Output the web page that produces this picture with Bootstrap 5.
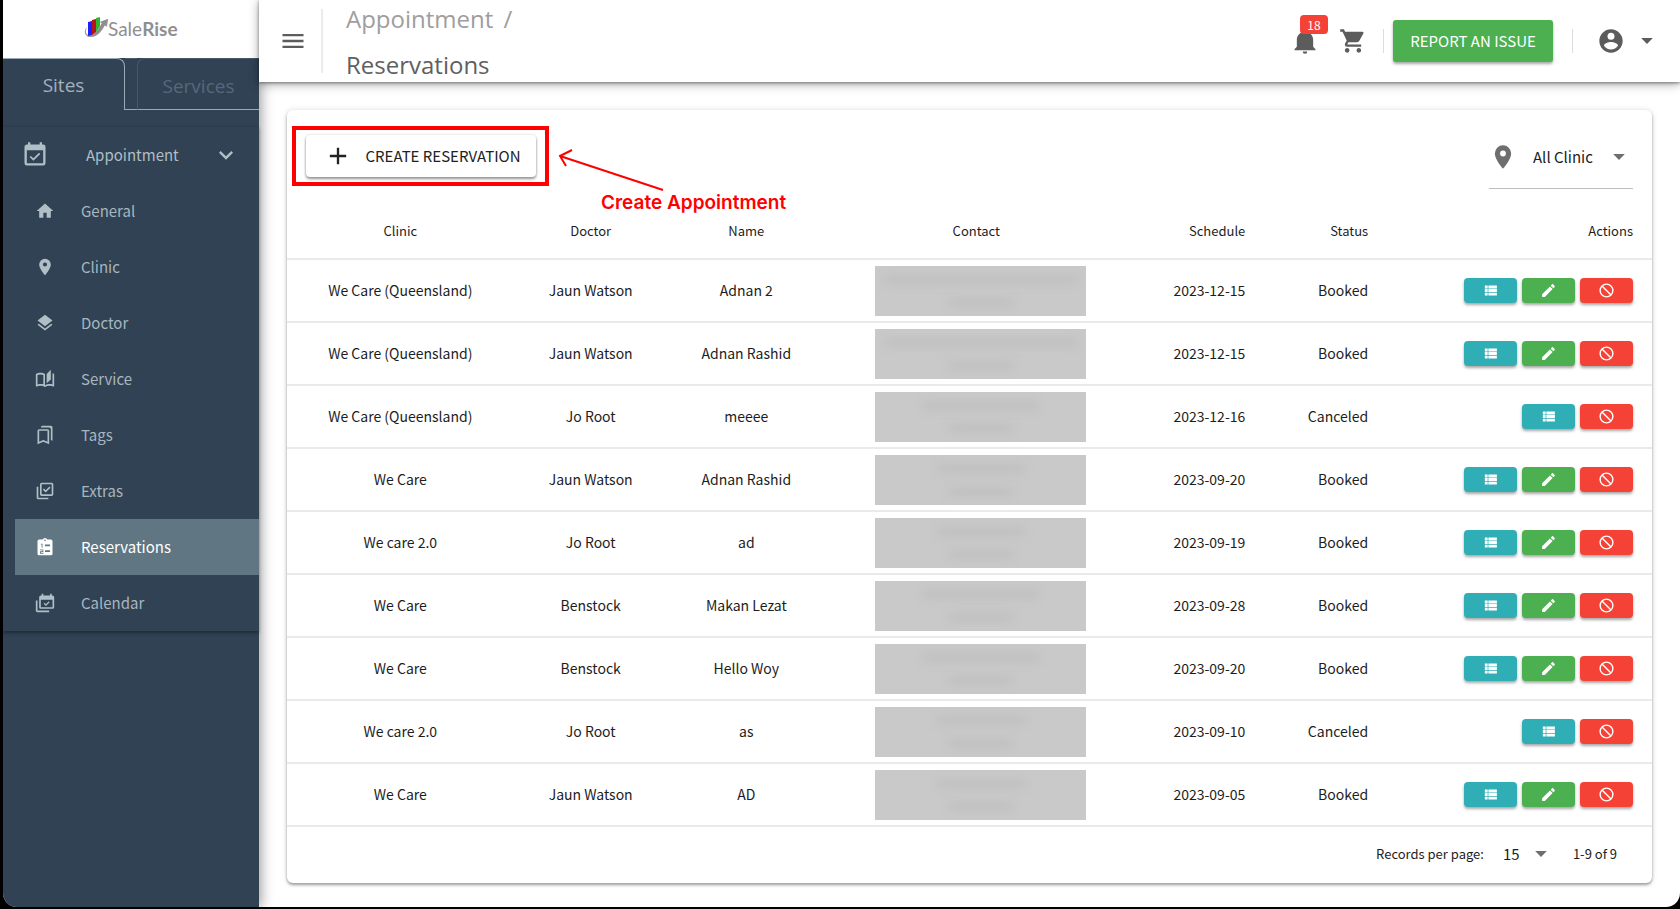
<!DOCTYPE html>
<html lang="en">
<head>
<meta charset="utf-8">
<meta name="viewport" content="width=device-width, initial-scale=1">
<title>SaleRise – Reservations</title>
<link href="https://cdn.jsdelivr.net/npm/bootstrap@5.3.0/dist/css/bootstrap.min.css" rel="stylesheet">
<style>
  :root { --navy: #314254; --mist: #b0bec5; --ink: #1d1d1d; --grey: #5c5c5c; }
  body { background: #000; color: var(--ink); font-family: "Noto Sans CJK SC", "Noto Sans", sans-serif; font-size: 14px; line-height: 20px; }
  .window { min-height: calc(100vh - 2px); margin: 0 0 2px 3px; border-radius: 0 0 14px 14px; background: #fff; overflow: hidden; }
  .ico { width: 28px; height: 28px; fill: currentColor; flex: none; display: block; }
  .ico-sm { width: 20px; height: 20px; }
  .ico-xs { width: 17px; height: 17px; }

  /* sidebar */
  .side { width: 256px; background: var(--navy); color: var(--mist); z-index: 1; box-shadow: 2px 0 12px rgba(0,0,0,.4); }
  .brand { height: 58px; background: #fff; }
  .brand svg { width: 98px; height: 28px; }
  .side-tabs { height: 52px; font-family: "Open Sans", sans-serif; font-size: 19px; }
  .side-tab { width: 122px; border: 1px solid #9aa9b5; border-width: 1px 1px 0 0; border-radius: 0 8px 0 0; color: #a3b1bb; background: none; }
  .side-gap { width: 12px; border-bottom: 1px solid #9aa9b5; border-top: 1px solid #4b5c6c; }
  .side-tab-off { border: 1px solid #46586a; border-width: 1px 0 0 1px; border-bottom: 1px solid #9aa9b5; border-radius: 8px 0 0 0; color: #56687a; background: none; }
  .side-list { margin-top: 16px; border-top: 1px solid #2c3c4d; box-shadow: 0 2px 3px rgba(0,0,0,.35); font-size: 15px; }
  .side-head { height: 56px; padding: 0 19px 0 18px; color: var(--mist); background: none; border: 0; }
  .side-head span { margin-left: 37px; font-size: 15px; }
  .side-link { height: 56px; margin-left: 12px; padding-left: 20px; gap: 26px; color: #a8b6be; text-decoration: none; }
  .side-link.active { background: #607682; color: #fff; }
  .side-link.active .ico { color: #fff; }
  .side-link .ico { color: var(--mist); }

  /* top bar */
  .topbar { height: 82px; padding: 0 19px 0 20px; z-index: 2; background: #fff; box-shadow: 0 2px 10px rgba(0,0,0,.35), 0 1px 3px rgba(0,0,0,.4); color: var(--grey); }
  .crumbs { font-family: "Open Sans", sans-serif; font-size: 24px; line-height: 46px; color: #606060; margin-left: 23px; padding-top: 2px; }
  .crumbs a { color: #9e9e9e; text-decoration: none; }
  .rule-tall { width: 2px; height: 64px; background: #ebebeb; margin-left: 14px; }
  .rule-short { width: 1px; height: 24px; background: #dcdcdc; }
  .icon-btn { padding: 0; border: 0; background: none; color: var(--grey); }
  .count { top: -12px; left: 9px; width: 28px; height: 19px; border-radius: 4px; background: #f44336; color: #fff; font-size: 12px; line-height: 19px; }
  .btn-issue { width: 160px; height: 42px; margin: 0 19px 0 9px; padding: 0; border: 0; border-radius: 3px; background: #4caf50; color: #fff; font-size: 15px; box-shadow: 0 2px 3px rgba(0,0,0,.35); }

  /* card */
  .sheet { margin: 28px 28px 23px 28px; border-radius: 6px; background: #fff; box-shadow: 0 2px 3px rgba(0,0,0,.35), 0 0 6px rgba(0,0,0,.12); }
  .tools { height: 93px; padding: 16px 19px 0 5px; }
  .callout-box { border: 4px solid #f00; width: 257px; height: 60px; }
  .btn-create { width: 230px; height: 42px; padding: 0 0 0 18px; gap: 14px; border: 0; border-radius: 4px; background: #fff; color: #222; font-size: 15px; box-shadow: 0 2px 3px rgba(0,0,0,.4), 0 0 3px rgba(0,0,0,.15); }
  .note { left: 260px; top: 18px; width: 250px; color: #f00; font-family: Inter, sans-serif; font-size: 19px; line-height: 24px; font-weight: 600; }
  .note svg { width: 120px; height: 44px; display: block; }
  .note div { padding-left: 45px; margin-top: -1px; }
  .pick { width: 144px; height: 63px; border-bottom: 1px solid #bdbdbd; color: #6e6e6e; }
  .pick select, .per-page select { appearance: none; border: 0; background: none; color: var(--ink); padding: 0; }
  .pick select { width: 75px; font-size: 15px; }

  .grid-table { table-layout: fixed; font-size: 14px; border-color: #e6e6e6; --bs-table-bg: transparent; }
  .grid-table th { height: 56px; font-weight: 400; font-size: 13px; vertical-align: middle; padding: 0 19px 0 0; color: var(--ink); border-bottom: 2px solid #eaeaea; }
  .grid-table td { height: 63px; vertical-align: middle; padding: 0 19px 0 0; color: var(--ink); border-bottom: 2px solid #eaeaea; }
  .grid-table .mid { padding: 0; text-align: center; }
  .grid-table td.mid, .grid-table td.end { padding-bottom: 2px; }
  .grid-table td.veil-cell { padding: 0 0 0 9px; }
  .grid-table .end { text-align: right; }
  .veil { width: 211px; height: 50px; background: #c9c9c9; gap: 14px; }
  .veil i { display: block; height: 9px; border-radius: 4px; background: #c0c0c0; filter: blur(4px); }
  .veil i:last-child { width: 64px; }
  .w-long { width: 194px; } .w-med { width: 116px; } .w-short { width: 88px; }
  .act { width: 53px; height: 25px; padding: 0; border: 0; border-radius: 4px; color: #fff; box-shadow: 0 2px 3px rgba(0,0,0,.35); }
  .act-view { background: #30aeb6; } .act-edit { background: #4caf50; } .act-stop { background: #f44336; }
  .foot { height: 56px; padding: 0 35px 2px 0; font-size: 13px; color: var(--ink); }
  .per-page { color: #6e6e6e; margin: 0 18px 0 19px; }
  .per-page select { width: 24px; font-size: 15px; }
</style>
</head>
<body>
<svg class="d-none" aria-hidden="true">
  <symbol id="menu" viewBox="0 0 24 24"><path d="M3 6h18v2H3zM3 11h18v2H3zM3 16h18v2H3z"/></symbol>
  <symbol id="bell" viewBox="0 0 24 24"><path d="M21,19V20H3V19L5,17V11C5,7.9 7.03,5.17 10,4.29C10,4.19 10,4.1 10,4A2,2 0 0,1 12,2A2,2 0 0,1 14,4C14,4.1 14,4.19 14,4.29C16.97,5.17 19,7.9 19,11V17L21,19M14,21A2,2 0 0,1 12,23A2,2 0 0,1 10,21"/></symbol>
  <symbol id="cart" viewBox="0 0 24 24"><path d="M17,18C15.89,18 15,18.89 15,20A2,2 0 0,0 17,22A2,2 0 0,0 19,20C19,18.89 18.1,18 17,18M1,2V4H3L6.6,11.59L5.24,14.04C5.09,14.32 5,14.65 5,15A2,2 0 0,0 7,17H19V15H7.42A0.25,0.25 0 0,1 7.17,14.75C7.17,14.7 7.18,14.66 7.2,14.63L8.1,13H15.55C16.3,13 16.96,12.58 17.3,11.97L20.88,5.5C20.95,5.34 21,5.17 21,5A1,1 0 0,0 20,4H5.21L4.27,2M7,18C5.89,18 5,18.89 5,20A2,2 0 0,0 7,22A2,2 0 0,0 9,20C9,18.89 8.1,18 7,18Z"/></symbol>
  <symbol id="user" viewBox="0 0 24 24"><path d="M12,19.2C9.5,19.2 7.29,17.92 6,16C6.03,14 10,12.9 12,12.9C14,12.9 17.97,14 18,16C16.71,17.92 14.5,19.2 12,19.2M12,5A3,3 0 0,1 15,8A3,3 0 0,1 12,11A3,3 0 0,1 9,8A3,3 0 0,1 12,5M12,2A10,10 0 0,0 2,12A10,10 0 0,0 12,22A10,10 0 0,0 22,12C22,6.47 17.5,2 12,2Z"/></symbol>
  <symbol id="caret" viewBox="0 0 24 24"><path d="M7,9.5L12,14.5L17,9.5H7Z"/></symbol>
  <symbol id="chev" viewBox="0 0 24 24"><path d="M7.41,8.58L12,13.17L16.59,8.58L18,10L12,16L6,10L7.41,8.58Z"/></symbol>
  <symbol id="plus" viewBox="0 0 24 24"><path d="M19,13H13V19H11V13H5V11H11V5H13V11H19V13Z"/></symbol>
  <symbol id="pin" viewBox="0 0 24 24"><path d="M12,11.5A2.5,2.5 0 0,1 9.5,9A2.5,2.5 0 0,1 12,6.5A2.5,2.5 0 0,1 14.5,9A2.5,2.5 0 0,1 12,11.5M12,2A7,7 0 0,0 5,9C5,14.25 12,22 12,22C12,22 19,14.25 19,9A7,7 0 0,0 12,2Z"/></symbol>
  <symbol id="home" viewBox="0 0 24 24"><path d="M10,20V14H14V20H19V12H22L12,3L2,12H5V20H10Z"/></symbol>
  <symbol id="layers" viewBox="0 0 24 24"><path d="M12,16L19.36,10.27L21,9L12,2L3,9L4.63,10.27M12,18.54L4.62,12.81L3,14.07L12,21.07L21,14.07L19.37,12.8L12,18.54Z"/></symbol>
  <symbol id="book" viewBox="0 0 24 24"><path d="M19 1L14 6V17L19 12.5V1M21 5V18.5C19.9 18.15 18.7 18 17.5 18C15.8 18 13.35 18.65 12 19.5V6C10.55 4.9 8.45 4.5 6.5 4.5C4.55 4.5 2.45 4.9 1 6V20.65C1 20.9 1.25 21.15 1.5 21.15C1.6 21.15 1.65 21.1 1.75 21.1C3.1 20.45 5.05 20 6.5 20C8.45 20 10.55 20.4 12 21.5C13.35 20.65 15.8 20 17.5 20C19.15 20 20.85 20.3 22.25 21.05C22.35 21.1 22.4 21.1 22.5 21.1C22.75 21.1 23 20.85 23 20.6V6C22.4 5.55 21.75 5.25 21 5M10 18.41C8.75 18.09 7.5 18 6.5 18C5.44 18 4.18 18.19 3 18.5V7.13C3.91 6.73 5.14 6.5 6.5 6.5C7.86 6.5 9.09 6.73 10 7.13V18.41Z"/></symbol>
  <symbol id="tags" viewBox="0 0 24 24"><path d="M19 18l2 1V3c0-1.1-.9-2-2-2H8.99C7.89 1 7 1.9 7 3h10c1.1 0 2 .9 2 2v13zM15 5H5c-1.1 0-2 .9-2 2v16l7-3 7 3V7c0-1.1-.9-2-2-2zm0 14.97l-4.21-1.81-.79-.34-.79.34L5 19.97V7h10v12.97z"/></symbol>
  <symbol id="extras" viewBox="0 0 24 24"><path d="M20,16V4H8V16H20M22,16A2,2 0 0,1 20,18H8C6.89,18 6,17.1 6,16V4C6,2.89 6.89,2 8,2H20A2,2 0 0,1 22,4V16M16,20V22H4A2,2 0 0,1 2,20V7H4V20H16M12.8 13.8L9.4 10.4L10.7 9.1L12.8 11.2L17.3 6.7L18.6 8L12.8 13.8Z"/></symbol>
  <symbol id="clip" viewBox="0 0 24 24"><path fill-rule="evenodd" d="M19 3h-4.2a3 3 0 0 0-5.6 0H5a2 2 0 0 0-2 2v15a2 2 0 0 0 2 2h14a2 2 0 0 0 2-2V5a2 2 0 0 0-2-2zM12 3a1 1 0 1 1 0 2a1 1 0 0 1 0-2zM12 9h6v2h-6zM12 16h6v2h-6zM7 8h2v5H8V9H7zM6 15h4v3H7v1h3v1H6v-3h3v-1H6z"/></symbol>
  <symbol id="cal" viewBox="0 0 24 24"><path d="M19,19H5V8H19M19,3H18V1H16V3H8V1H6V3H5C3.89,3 3,3.9 3,5V19A2,2 0 0,0 5,21H19A2,2 0 0,0 21,19V5A2,2 0 0,0 19,3M16.53,11.06L15.47,10L10.59,14.88L8.47,12.76L7.41,13.82L10.59,17L16.53,11.06Z"/></symbol>
  <symbol id="cals" viewBox="0 0 24 24"><path d="M21,17V8H7V17H21M21,3A2,2 0 0,1 23,5V17A2,2 0 0,1 21,19H7C5.89,19 5,18.1 5,17V5A2,2 0 0,1 7,3H8V1H10V3H18V1H20V3H21M17.53,11.06L13.09,15.5L10.41,12.82L11.47,11.76L13.09,13.38L16.47,10L17.53,11.06M3,21H17V23H3C1.89,23 1,22.1 1,21V9H3V21Z"/></symbol>
  <symbol id="list" viewBox="0 0 24 24"><path d="M9,5V9H21V5M9,19H21V15H9M9,14H21V10H9M4,9H8V5H4M4,19H8V15H4M4,14H8V10H4V14Z"/></symbol>
  <symbol id="pencil" viewBox="0 0 24 24"><path d="M20.71,7.04C21.1,6.65 21.1,6 20.71,5.63L18.37,3.29C18,2.9 17.35,2.9 16.96,3.29L15.12,5.12L18.87,8.87M3,17.25V21H6.75L17.81,9.93L14.06,6.18L3,17.25Z"/></symbol>
  <symbol id="stop" viewBox="0 0 24 24"><g fill="none" stroke="currentColor" stroke-width="2"><circle cx="12" cy="12" r="9"/><path d="M5.6 5.6l12.8 12.8"/></g></symbol>
</svg>

<div class="window d-flex">
  <aside class="side position-relative flex-shrink-0">
    <div class="brand d-flex align-items-center justify-content-center">
      <svg viewBox="0 0 98 28" role="img" aria-label="SaleRise">
        <path d="M5 12c-4 4-2 9 2 10 8 1 13-6 16-12l2 2 1-8-8 3 2 1c-4 7-8 12-13 12-3 0-4-3-2-8z" fill="#999"/>
        <path d="M6 7l4-1v14l-4 1z" fill="#1f1fff"/><path d="M10 5l4-1v13l-4 3z" fill="#b8121b"/><path d="M14 3l4-1v9l-4 6z" fill="#2db52d"/>
        <path d="M9 22c6-2 10-6 13-12l2 1 2-7-8 3 2 1c-3 7-7 11-11 14z" fill="#8e8e8e"/>
        <text x="26" y="21" font-family="Lato, sans-serif" font-size="19" fill="#8f8f8f">Sale<tspan font-weight="700">Rise</tspan></text>
      </svg>
    </div>
    <div class="side-tabs d-flex">
      <button type="button" class="side-tab p-0">Sites</button>
      <div class="side-gap"></div>
      <button type="button" class="side-tab-off flex-grow-1 px-0 pt-1 pb-0">Services</button>
    </div>
    <nav class="side-list">
      <button type="button" class="side-head w-100 d-flex align-items-center">
        <svg class="ico"><use href="#cal"/></svg><span class="me-auto">Appointment</span><svg class="ico"><use href="#chev"/></svg>
      </button>
      <a href="#" class="side-link d-flex align-items-center"><svg class="ico ico-sm"><use href="#home"/></svg>General</a>
      <a href="#" class="side-link d-flex align-items-center"><svg class="ico ico-sm"><use href="#pin"/></svg>Clinic</a>
      <a href="#" class="side-link d-flex align-items-center"><svg class="ico ico-sm"><use href="#layers"/></svg>Doctor</a>
      <a href="#" class="side-link d-flex align-items-center"><svg class="ico ico-sm"><use href="#book"/></svg>Service</a>
      <a href="#" class="side-link d-flex align-items-center"><svg class="ico ico-sm"><use href="#tags"/></svg>Tags</a>
      <a href="#" class="side-link d-flex align-items-center"><svg class="ico ico-sm"><use href="#extras"/></svg>Extras</a>
      <a href="#" class="side-link active d-flex align-items-center" aria-current="page"><svg class="ico ico-sm"><use href="#clip"/></svg>Reservations</a>
      <a href="#" class="side-link d-flex align-items-center"><svg class="ico ico-sm"><use href="#cals"/></svg>Calendar</a>
    </nav>
  </aside>

  <div class="flex-grow-1">
    <header class="topbar position-relative d-flex align-items-center">
      <button type="button" class="icon-btn" aria-label="Menu"><svg class="ico"><use href="#menu"/></svg></button>
      <div class="rule-tall"></div>
      <div class="crumbs me-auto"><a href="#">Appointment&nbsp;<span class="ps-1">/</span></a><br>Reservations</div>
      <button type="button" class="icon-btn position-relative me-3 pe-1" aria-label="Notifications"><svg class="ico"><use href="#bell"/></svg><span class="count position-absolute">18</span></button>
      <button type="button" class="icon-btn me-3" aria-label="Cart"><svg class="ico"><use href="#cart"/></svg></button>
      <div class="rule-short"></div>
      <button type="button" class="btn-issue">REPORT AN ISSUE</button>
      <div class="rule-short me-4"></div>
      <button type="button" class="icon-btn d-flex align-items-center gap-2" aria-label="Account"><svg class="ico"><use href="#user"/></svg><svg class="ico"><use href="#caret"/></svg></button>
    </header>

    <main class="sheet">
      <div class="tools d-flex justify-content-between align-items-start">
        <div class="callout-box position-relative d-flex align-items-center justify-content-center">
          <button type="button" class="btn-create d-flex align-items-center"><svg class="ico"><use href="#plus"/></svg>CREATE RESERVATION</button>
          <div class="note position-absolute">
            <svg viewBox="0 0 120 44" fill="none" stroke="#f00" stroke-width="2"><path d="M4 8L107 42M16 2L4 8l6 10"/></svg>
            <div>Create Appointment</div>
          </div>
        </div>
        <label class="pick d-flex align-items-center"><svg class="ico me-3"><use href="#pin"/></svg>
          <select aria-label="Clinic"><option>All Clinic</option></select><svg class="ico"><use href="#caret"/></svg></label>
      </div>

      <table class="table grid-table mb-0">
        <colgroup><col style="width:16.6%"><col style="width:11.3%"><col style="width:11.5%"><col style="width:22.2%"><col style="width:10%"><col style="width:9%"><col style="width:19.4%"></colgroup>
        <thead><tr><th class="mid">Clinic</th><th class="mid">Doctor</th><th class="mid">Name</th><th class="mid">Contact</th><th class="end">Schedule</th><th class="end">Status</th><th class="end">Actions</th></tr></thead>
        <tbody id="rows"></tbody>
      </table>

      <div class="foot d-flex align-items-center justify-content-end">
        <label for="per">Records per page:</label>
        <div class="per-page d-flex align-items-center"><select id="per"><option>15</option></select><svg class="ico"><use href="#caret"/></svg></div>
        <span>1-9 of 9</span>
      </div>
    </main>
  </div>
</div>

<script src="https://cdn.jsdelivr.net/npm/bootstrap@5.3.0/dist/js/bootstrap.bundle.min.js"></script>
<script>
  // clinic, doctor, name, width of the hidden contact line, date, status
  const reservations = [
    ['We Care (Queensland)', 'Jaun Watson', 'Adnan 2', 'w-long', '2023-12-15', 'Booked'],
    ['We Care (Queensland)', 'Jaun Watson', 'Adnan Rashid', 'w-long', '2023-12-15', 'Booked'],
    ['We Care (Queensland)', 'Jo Root', 'meeee', 'w-med', '2023-12-16', 'Canceled'],
    ['We Care', 'Jaun Watson', 'Adnan Rashid', 'w-short', '2023-09-20', 'Booked'],
    ['We care 2.0', 'Jo Root', 'ad', 'w-short', '2023-09-19', 'Booked'],
    ['We Care', 'Benstock', 'Makan Lezat', 'w-med', '2023-09-28', 'Booked'],
    ['We Care', 'Benstock', 'Hello Woy', 'w-med', '2023-09-20', 'Booked'],
    ['We care 2.0', 'Jo Root', 'as', 'w-short', '2023-09-10', 'Canceled'],
    ['We Care', 'Jaun Watson', 'AD', 'w-short', '2023-09-05', 'Booked']
  ];
  const action = (kind, icon, label) =>
    `<button type="button" class="act ${kind} d-flex align-items-center justify-content-center" aria-label="${label}"><svg class="ico ico-xs"><use href="#${icon}"/></svg></button>`;
  document.getElementById('rows').innerHTML = reservations.map(([clinic, doctor, name, width, date, status]) => `
    <tr><td class="mid">${clinic}</td><td class="mid">${doctor}</td><td class="mid">${name}</td>
    <td class="veil-cell"><div class="veil mx-auto d-flex flex-column align-items-center justify-content-center"><i class="${width}"></i><i></i></div></td>
    <td class="end">${date}</td><td class="end">${status}</td>
    <td><div class="d-flex justify-content-end" style="gap:5px">${action('act-view', 'list', 'View')}${status === 'Booked' ? action('act-edit', 'pencil', 'Edit') : ''}${action('act-stop', 'stop', 'Cancel')}</div></td></tr>`).join('');
</script>
</body>
</html>
